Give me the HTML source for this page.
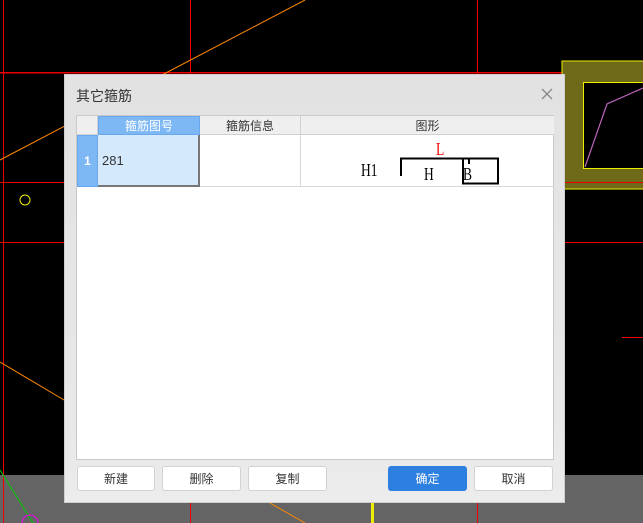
<!DOCTYPE html>
<html><head><meta charset="utf-8"><style>
*{margin:0;padding:0;box-sizing:border-box}
body{width:643px;height:523px;overflow:hidden;background:#000;position:relative;font-family:"Liberation Sans","Noto Sans CJK SC",sans-serif;font-size:12px;color:#333}
.abs{position:absolute}
.dlg{left:64px;top:74px;width:501px;height:429px;border:1px solid #cfcfcf;background:linear-gradient(#e2e2e2,#e8e8e8 80%,#ececec)}
.title{left:11px;top:11px;font-size:14px;color:#333}
.grid{left:11px;top:40px;width:478px;height:345px;background:#fff;border:1px solid #c9c9c9}
.cell{position:absolute;display:flex;align-items:center;justify-content:center}
.btn{position:absolute;top:466px;height:25px;border:1px solid #d2d2d2;border-radius:3px;background:#fff;display:flex;align-items:center;justify-content:center;font-size:12px;color:#333}
.ser{font-family:"Liberation Serif",serif;position:absolute;font-size:18px;line-height:18px;transform:scaleX(0.75);transform-origin:left}
</style></head><body>
<svg class="abs" style="left:0;top:0" width="643" height="523">
<rect x="0" y="475" width="643" height="48" fill="#646464"/>
<rect x="0" y="72" width="643" height="1.5" fill="#e00"/>
<rect x="0" y="182" width="643" height="1" fill="#e00"/>
<rect x="0" y="242" width="643" height="1" fill="#e00"/>
<rect x="3" y="0" width="1" height="523" fill="#e00"/>
<rect x="190" y="0" width="1" height="523" fill="#e00"/>
<rect x="477" y="0" width="1" height="523" fill="#e00"/>
<rect x="622" y="337" width="21" height="1" fill="#e00"/>
<line x1="305" y1="0" x2="0" y2="160" stroke="#f80"/>
<line x1="0" y1="362" x2="64" y2="400" stroke="#f80"/>
<line x1="270" y1="503" x2="305" y2="523" stroke="#f80"/>
<line x1="0" y1="470" x2="33" y2="523" stroke="#0c0"/>
<circle cx="25" cy="200" r="5" fill="none" stroke="#ee0"/>
<circle cx="30" cy="523" r="8" fill="none" stroke="#e0e"/>
<rect x="371" y="503" width="3" height="20" fill="#ee0"/>
<rect x="562" y="61" width="90" height="128" fill="#6e6a1a" stroke="#ee0"/>
<rect x="583.5" y="82.5" width="70" height="86" fill="#000" stroke="#ee0"/>
<rect x="562" y="182" width="81" height="1" fill="#e00"/>
<polyline points="585,167 607,104 643,88" fill="none" stroke="#b6b" stroke-width="1.2"/>
</svg>
<div class="abs dlg">
<div class="abs title">其它箍筋</div>
<svg class="abs" style="left:476px;top:13px" width="12" height="12"><path d="M1 1L11 11M11 1L1 11" stroke="#888" stroke-width="1.3"/></svg>
<div class="abs grid">
<div class="cell" style="left:0;top:0;width:21px;height:19px;background:#efefef;border-right:1px solid #d0d0d0;border-bottom:1px solid #d0d0d0"></div>
<div class="cell" style="left:21px;top:0;width:102px;height:19px;background:#7db8f5;color:#fff;border:1px solid #6aa8ee">箍筋图号</div>
<div class="cell" style="left:123px;top:0;width:101px;height:19px;background:#efefef;border-right:1px solid #d0d0d0;border-bottom:1px solid #d0d0d0">箍筋信息</div>
<div class="cell" style="left:224px;top:0;width:253px;height:19px;background:#efefef;border-bottom:1px solid #d0d0d0">图形</div>
<div class="cell" style="left:0;top:19px;width:21px;height:52px;background:#7db8f5;color:#fff;font-weight:bold;border:1px solid #6aa8ee">1</div>
<div class="cell" style="left:21px;top:19px;width:102px;height:52px;background:#d5e9fd;border-right:2px solid #777;border-bottom:2px solid #777;justify-content:flex-start;padding-left:4px;font-size:13px">281</div>
<div class="cell" style="left:123px;top:19px;width:101px;height:52px;border-right:1px solid #d8d8d8;border-bottom:1px solid #d8d8d8"></div>
<div class="cell" style="left:224px;top:19px;width:253px;height:52px;border-bottom:1px solid #d8d8d8"></div>
</div>
</div>
<div class="ser" style="left:436px;top:140px;color:#e00">L</div>
<div class="ser" style="left:361px;top:161px;color:#000">H1</div>
<div class="ser" style="left:424px;top:165px;color:#000">H</div>
<div class="ser" style="left:463px;top:165px;color:#000">B</div>
<svg class="abs" style="left:0;top:0" width="643" height="523">
<polyline points="401,176 401,158.5 498,158.5 498,183.5 463,183.5 463,158.5" fill="none" stroke="#000" stroke-width="2"/>
<line x1="469" y1="158" x2="469" y2="164" stroke="#000" stroke-width="2"/>
</svg>
<div class="btn" style="left:77px;width:78px">新建</div>
<div class="btn" style="left:162px;width:79px">删除</div>
<div class="btn" style="left:248px;width:79px">复制</div>
<div class="btn" style="left:388px;width:79px;background:#2d7fe0;border-color:#2d7fe0;color:#fff">确定</div>
<div class="btn" style="left:474px;width:79px">取消</div>
</body></html>
